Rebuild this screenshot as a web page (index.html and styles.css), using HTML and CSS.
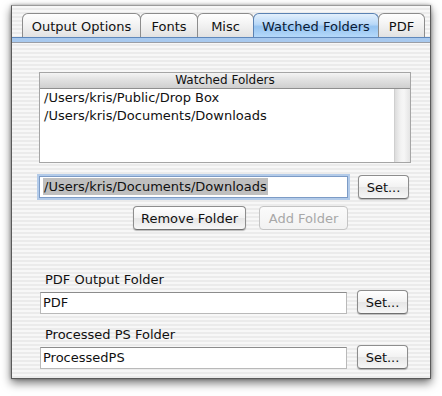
FILE: index.html
```html
<!DOCTYPE html>
<html>
<head>
<meta charset="utf-8">
<link rel="stylesheet" href="styles.css">
</head>
<body>
<div class="window">
  <div class="tabs">
    <div class="tab tab-output">Output Options</div>
    <div class="tab tab-fonts">Fonts</div>
    <div class="tab tab-misc">Misc</div>
    <div class="tab tab-watched selected">Watched Folders</div>
    <div class="tab tab-pdf">PDF</div>
  </div>
  <div class="tabline"></div>
  <div class="pane">
    <div class="list">
      <div class="list-header">Watched Folders</div>
      <div class="list-body">
        <div class="list-rows">
          <div class="list-row">/Users/kris/Public/Drop Box</div>
          <div class="list-row">/Users/kris/Documents/Downloads</div>
        </div>
        <div class="scrollbar"></div>
      </div>
    </div>
    <div class="field-row first">
      <div class="field focused"><span class="sel">/Users/kris/Documents/Downloads</span></div>
      <button class="btn set">Set...</button>
    </div>
    <div class="action-row">
      <button class="btn remove">Remove Folder</button>
      <button class="btn add" disabled>Add Folder</button>
    </div>
    <div class="label label-pdf">PDF Output Folder</div>
    <div class="field-row">
      <div class="field plain">PDF</div>
      <button class="btn set">Set...</button>
    </div>
    <div class="label label-ps">Processed PS Folder</div>
    <div class="field-row">
      <div class="field plain">ProcessedPS</div>
      <button class="btn set">Set...</button>
    </div>
  </div>
</div>
</body>
</html>
```
FILE: styles.css
```css
html, body {
  margin: 0;
  padding: 0;
  background: #ffffff;
}
body {
  font-family: "DejaVu Sans", "Liberation Sans", sans-serif;
  font-size: 13px;
  color: #111;
  padding: 5px 0 0 11px;
  width: 442px;
  height: 396px;
  box-sizing: border-box;
  overflow: hidden;
}
.window {
  width: 420px;
  height: 374px;
  box-sizing: border-box;
  border: 1px solid #5a5a5a;
  border-top-color: #9a9a9a;
  box-shadow: 0 4px 9px rgba(0,0,0,0.55), 0 0 3px rgba(0,0,0,0.3);
  background: repeating-linear-gradient(to bottom, #f7f7f7 0px, #f7f7f7 2px, #ebebeb 2px, #ebebeb 4px);
  display: flex;
  flex-direction: column;
}
.tabs {
  display: flex;
  padding: 7px 0 0 10px;
  height: 31px;
  box-sizing: border-box;
}
.tab {
  height: 24px;
  box-sizing: border-box;
  border: 1px solid #8c8c8c;
  border-bottom: none;
  border-radius: 6px 6px 0 0;
  background: linear-gradient(to bottom, #ffffff 0%, #f3f3f3 45%, #e2e2e2 100%);
  display: flex;
  align-items: center;
  justify-content: center;
  font-size: 13px;
  color: #111;
  margin-right: -1px;
  padding-top: 1px;
}
.tab-output { width: 119px; }
.tab-fonts { width: 58px; }
.tab-misc { width: 57px; }
.tab-watched { width: 126px; }
.tab-pdf { width: 47px; }
.tab.selected {
  background: linear-gradient(to bottom, #e3f0fc 0%, #b8d8f8 45%, #95c3f0 55%, #b5d9fa 100%);
  border-color: #5a82b3;
  color: #0b1a33;
}
.tabline {
  height: 4px;
  border-top: 1px solid #5f88bb;
  border-bottom: 1px solid #9a9ea6;
  background: #a8c9ee;
}
.pane {
  padding: 29px 19px 0 27px;
  display: flex;
  flex-direction: column;
}
.list {
  height: 91px;
  border: 1px solid #a5a5a5;
  background: #fff;
  display: flex;
  flex-direction: column;
  box-sizing: border-box;
}
.list-header {
  height: 16px;
  box-sizing: border-box;
  background: linear-gradient(to bottom, #f4f4f4 0%, #e3e3e3 40%, #cfcfcf 100%);
  border-bottom: 1px solid #8f8f8f;
  font-size: 12px;
  line-height: 15px;
  text-align: center;
  color: #111;
}
.list-body {
  flex: 1;
  display: flex;
}
.list-rows {
  flex: 1;
  padding: 0 0 0 4px;
}
.list-row {
  height: 18px;
  line-height: 18px;
  font-size: 13px;
}
.scrollbar {
  width: 15px;
  border-left: 1px solid #cfcfcf;
  background: linear-gradient(to right, #dcdcdc 0%, #f3f3f3 40%, #f6f6f6 60%, #e4e4e4 100%);
}
.field-row {
  display: flex;
  align-items: center;
  gap: 10px;
}
.field-row.first {
  margin-top: 12px;
}
.field {
  width: 309px;
  height: 22px;
  box-sizing: border-box;
  background: #fff;
  font-size: 13px;
  line-height: 20px;
  padding-left: 3px;
  white-space: nowrap;
}
.field.focused {
  border: 1px solid #7c9bc6;
  box-shadow: 0 0 0 2px #b3cbe9;
  height: 22px;
}
.sel {
  background: #bfbfbf;
  padding: 1px 1px;
}
.field.plain {
  width: 307px;
  margin-left: 1px;
  height: 22px;
  border: 1px solid #b9b9b9;
  border-top-color: #8c8c8c;
  line-height: 20px;
  padding-left: 2px;
  align-self: flex-end;
}
.btn {
  font-family: "DejaVu Sans", "Liberation Sans", sans-serif;
  font-size: 13px;
  color: #111;
  height: 24px;
  padding: 0;
  border: 1px solid #8d8d8d;
  border-bottom-color: #6f6f6f;
  border-radius: 4px;
  background: linear-gradient(to bottom, #ffffff 0%, #f2f2f2 50%, #e6e6e6 51%, #f7f7f7 100%);
  box-shadow: 0 1px 1px rgba(0,0,0,0.25);
}
.btn.set {
  width: 51px;
}
.action-row {
  display: flex;
  justify-content: flex-end;
  gap: 13px;
  width: 309px;
  margin-top: 7px;
}
.btn.remove {
  width: 113px;
}
.btn.add {
  width: 89px;
  color: #a8a8a8;
  border-color: #c4c4c4;
  box-shadow: none;
  background: linear-gradient(to bottom, #fbfbfb 0%, #f2f2f2 100%);
}
.label {
  padding-left: 6px;
  font-size: 13px;
  line-height: 16px;
}
.label-pdf {
  margin-top: 42px;
  margin-bottom: 2px;
}
.label-ps {
  margin-top: 13px;
  margin-bottom: 2px;
}
```
